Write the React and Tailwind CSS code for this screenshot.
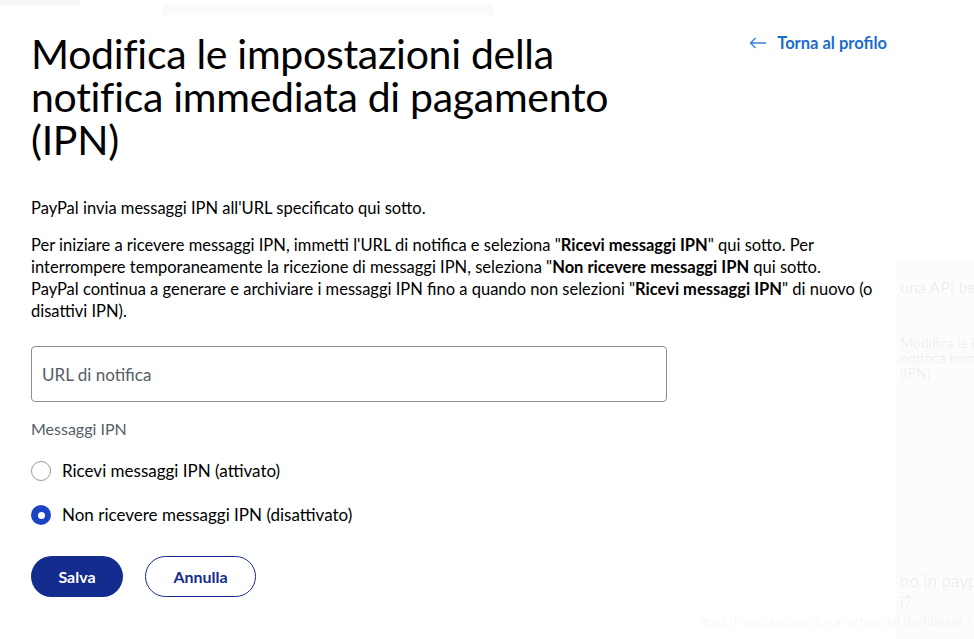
import { useState } from 'react';

const font = "font-['Lato','Noto_Sans',sans-serif]";

function Radio({ checked, label, onClick }) {
    return (
        <button type="button" onClick={onClick} className="flex items-center gap-[11px] h-6 text-left">
            {checked ? (
                <span className="w-5 h-5 rounded-full bg-[#1c43c4] flex items-center justify-center">
                    <span className="w-[7px] h-[7px] rounded-full bg-white" />
                </span>
            ) : (
                <span className="w-5 h-5 rounded-full border border-[#9a9a9a] bg-white" />
            )}
            <span className="text-[17px] text-black">{label}</span>
        </button>
    );
}

export default function App() {
    const [on, setOn] = useState(false);

    return (
        <div className={`${font} relative w-[974px] h-[639px] overflow-hidden bg-white`}>
            {/* faint ghost of the page behind */}
            <div className="absolute left-0 top-0 w-[80px] h-[5px] bg-black/[0.03]" />
            <div className="absolute left-[163px] top-[5px] w-[330px] h-[10px] bg-black/[0.02]" />
            <div className="absolute right-0 top-[260px] w-[78px] h-[379px] bg-black/[0.012] text-black/[0.07] pl-[4px] overflow-hidden whitespace-nowrap">
                <p className="text-[16px] mt-[15px]">una API ben</p>
                <p className="text-[14px] leading-[15px] mt-[36px]">Modifica le i<br />notifica imm<br />(IPN)</p>
                <p className="text-[17px] leading-[22px] mt-[190px]">no in paypa</p>
                <p className="text-[17px] leading-[22px]">i?</p>
            </div>
            <p className="absolute left-[700px] top-[612px] text-[13px] text-black/[0.05] whitespace-nowrap">
                Invia il messaggio ma non arriva dal dashboard non so se è
            </p>

            <div className="w-[856px] ml-[31px] pt-[32px]">
                <div className="flex justify-between items-start">
                    <h1 className="text-[41px] leading-[43px] text-black tracking-[-0.3px]">
                        Modifica le impostazioni della<br />
                        notifica immediata di pagamento<br />
                        (IPN)
                    </h1>
                    <a href="#" className="flex items-center gap-[10px] text-[#1b6ccc] font-bold text-[16.5px] -mt-[1px]">
                        <svg width="18" height="12" viewBox="0 0 18 12" fill="none" stroke="#3b7fd6" strokeWidth="1.3">
                            <path d="M17 6H1.5M6.5 1L1.5 6l5 5" />
                        </svg>
                        Torna al profilo
                    </a>
                </div>

                <p className="mt-[36px] text-[16.5px] leading-[22px] text-black whitespace-nowrap">
                    PayPal invia messaggi IPN all'URL specificato qui sotto.
                </p>
                <p className="mt-[15px] text-[16.5px] leading-[22px] text-black whitespace-nowrap">
                    Per iniziare a ricevere messaggi IPN, immetti l'URL di notifica e seleziona "<b>Ricevi messaggi IPN</b>" qui sotto. Per<br />
                    interrompere temporaneamente la ricezione di messaggi IPN, seleziona "<b>Non ricevere messaggi IPN</b> qui sotto.<br />
                    PayPal continua a generare e archiviare i messaggi IPN fino a quando non selezioni "<b>Ricevi messaggi IPN</b>" di nuovo (o<br />
                    disattivi IPN).
                </p>

                <input
                    type="text"
                    placeholder="URL di notifica"
                    className="mt-[24px] block w-[636px] h-[56px] rounded-[4px] border border-[#8e8e8e] px-[10px] text-[17px] placeholder:text-[#545d68] outline-none"
                />

                <p className="mt-[16px] text-[16px] leading-[22px] text-[#545d68]">Messaggi IPN</p>

                <div className="mt-[19px] flex flex-col gap-[20px]">
                    <Radio checked={on} label="Ricevi messaggi IPN (attivato)" onClick={() => setOn(true)} />
                    <Radio checked={!on} label="Non ricevere messaggi IPN (disattivato)" onClick={() => setOn(false)} />
                </div>

                <div className="mt-[29px] flex gap-[22px]">
                    <button className="w-[92px] h-[41px] rounded-full bg-[#142c8e] text-white font-bold text-[16px]">
                        Salva
                    </button>
                    <button className="w-[111px] h-[41px] rounded-full border border-[#142c8e] text-[#142c8e] font-bold text-[16px]">
                        Annulla
                    </button>
                </div>
            </div>
        </div>
    );
}
